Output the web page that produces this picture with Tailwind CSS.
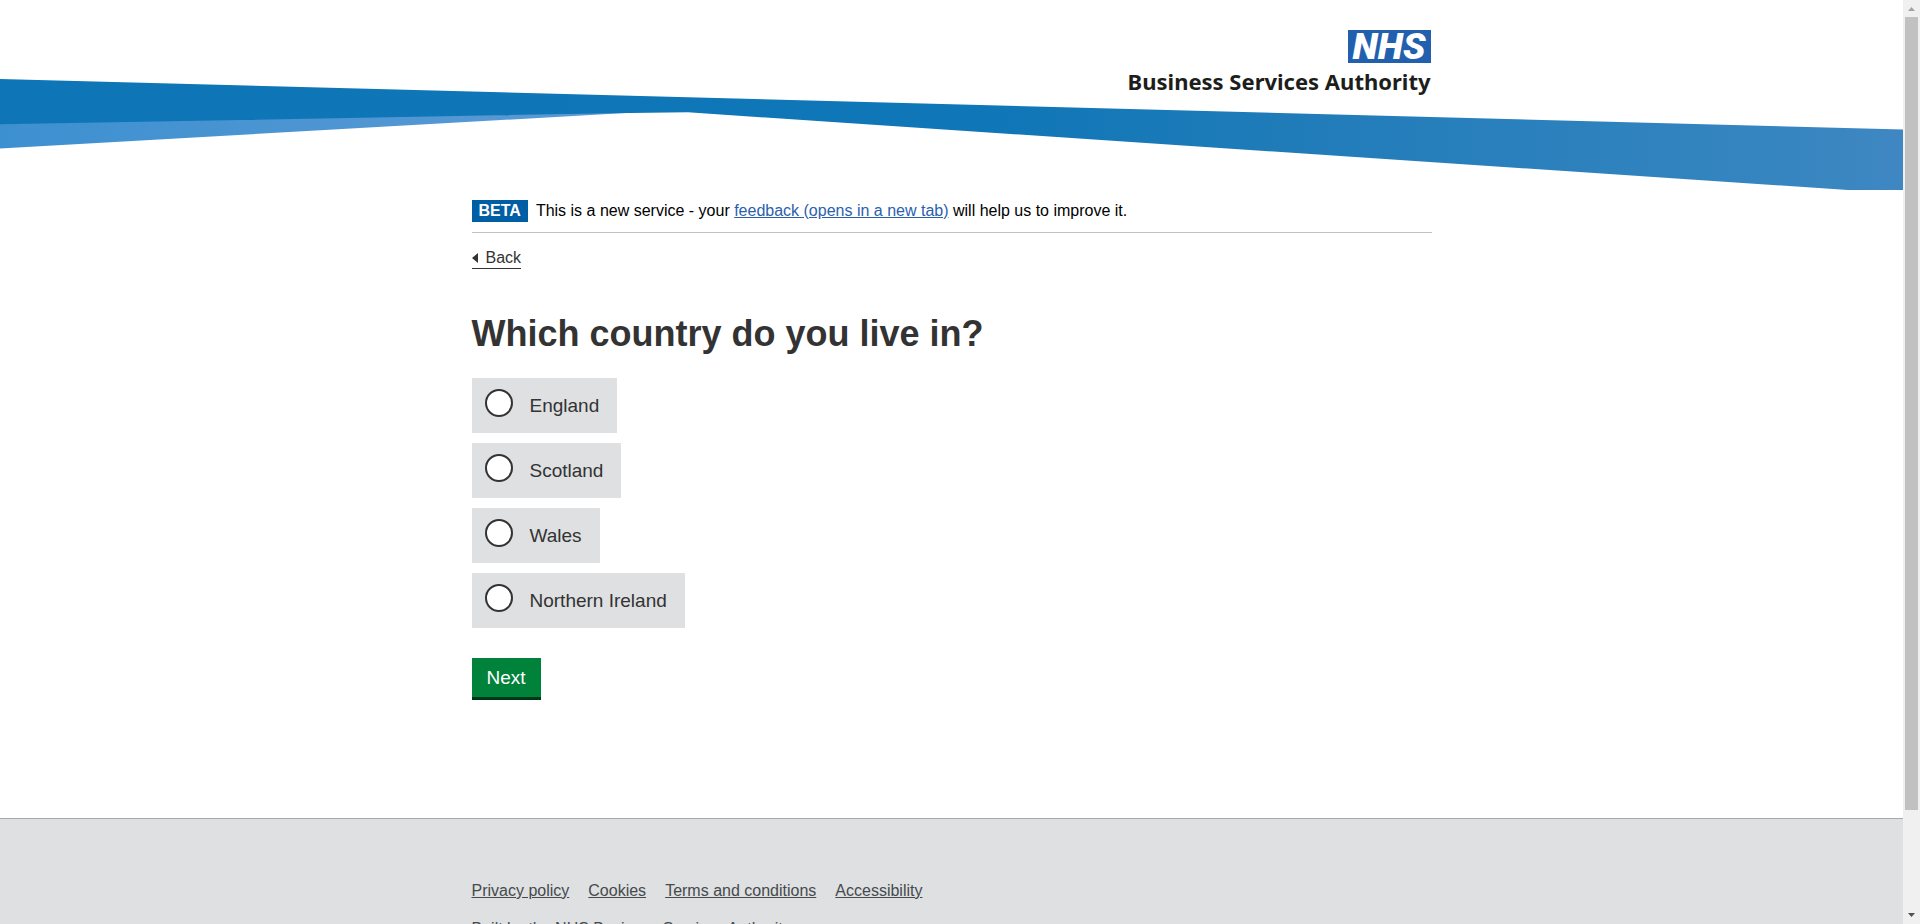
<!DOCTYPE html>
<html lang="en">
<head>
<meta charset="utf-8">
<meta name="viewport" content="width=device-width, initial-scale=1">
<title>Which country do you live in?</title>
<script src="https://cdn.jsdelivr.net/npm/@tailwindcss/browser@4"></script>
</head>
<body class="flex h-screen overflow-hidden bg-white font-['Liberation_Sans',Arial,sans-serif] text-base text-[#333333]">
<div class="flex min-w-0 flex-1 flex-col overflow-hidden">
  <header class="relative h-[190px] shrink-0">
    <svg class="absolute inset-0 h-full w-full" viewBox="0 0 1903 190" preserveAspectRatio="none" aria-hidden="true">
      <defs>
        <linearGradient id="main" gradientUnits="userSpaceOnUse" x1="0" y1="0" x2="1903" y2="0">
          <stop offset="0" stop-color="#0e75b6"/><stop offset="0.52" stop-color="#0f76b7"/><stop offset="0.68" stop-color="#207cb9"/><stop offset="0.93" stop-color="#3585c0"/><stop offset="1" stop-color="#3f87c2"/>
        </linearGradient>
        <linearGradient id="light" x1="0" y1="0" x2="1" y2="0">
          <stop offset="0" stop-color="#3d90d0"/><stop offset="1" stop-color="#5c9ad5"/>
        </linearGradient>
      </defs>
      <path fill="url(#light)" d="M0 123 0 148.500 630 112.800 610 112z"/>
      <path fill="url(#main)" d="M0 79 1903 129.500V190H1848L688 112.300 610 113.200 0 124.300z"/>
    </svg>
    <div class="relative mx-auto flex max-w-[960px] flex-col items-end pt-[30px] pr-px">
      <div class="flex h-[33px] w-[83px] items-center justify-center bg-[#2260ae] pt-px font-[Roboto,sans-serif] text-[37px] leading-8 font-black text-white italic">NHS</div>
      <div class="mt-[2px] font-['Noto_Sans',sans-serif] text-[22px] leading-8 font-bold whitespace-nowrap text-[#1d1d1b]">Business Services Authority</div>
    </div>
  </header>
  <main class="mx-auto flex w-full max-w-[960px] shrink-0 flex-col items-start pt-[10px] pb-[118px]">
    <div class="flex w-full items-center gap-2 border-b border-[#bfc1c3] pb-[10px] text-black">
      <strong class="bg-[#005ea5] px-[7px] leading-[22px] font-bold text-white">BETA</strong>
      <p class="leading-[22px]">This is a new service - your <a href="#" class="text-[#2b60ad] underline">feedback (opens in a new tab)</a> will help us to improve it.</p>
    </div>
    <a href="#" class="mt-[15px] flex items-center gap-2 border-b border-[#333333] leading-5">
      <svg class="h-[10px] w-[6px]" viewBox="0 0 6 10" fill="currentColor" aria-hidden="true"><path d="M6 0v10L0 5z"/></svg>Back
    </a>
    <form class="flex flex-col items-start">
      <fieldset class="flex flex-col items-start gap-[10px]">
        <legend class="pt-[44px] pb-[23px]"><h1 class="text-4xl leading-[42px] font-bold">Which country do you live in?</h1></legend>
        <label class="flex h-[55px] items-start gap-[17px] bg-[#dee0e2] pt-[11px] pr-[18px] pl-[13px] text-[19px]"><input type="radio" name="country" class="size-7 appearance-none rounded-full border-2 border-[#333333] bg-white checked:border-8"><span class="pt-[3px] leading-7">England</span></label>
        <label class="flex h-[55px] items-start gap-[17px] bg-[#dee0e2] pt-[11px] pr-[18px] pl-[13px] text-[19px]"><input type="radio" name="country" class="size-7 appearance-none rounded-full border-2 border-[#333333] bg-white checked:border-8"><span class="pt-[3px] leading-7">Scotland</span></label>
        <label class="flex h-[55px] items-start gap-[17px] bg-[#dee0e2] pt-[11px] pr-[18px] pl-[13px] text-[19px]"><input type="radio" name="country" class="size-7 appearance-none rounded-full border-2 border-[#333333] bg-white checked:border-8"><span class="pt-[3px] leading-7">Wales</span></label>
        <label class="flex h-[55px] items-start gap-[17px] bg-[#dee0e2] pt-[11px] pr-[18px] pl-[13px] text-[19px]"><input type="radio" name="country" class="size-7 appearance-none rounded-full border-2 border-[#333333] bg-white checked:border-8"><span class="pt-[3px] leading-7">Northern Ireland</span></label>
      </fieldset>
      <button type="button" class="mt-[30px] border-b-3 border-[#003618] bg-[#00823b] px-[15px] pt-2 pb-[7px] text-[19px] leading-6 text-white">Next</button>
    </form>
  </main>
  <footer class="shrink-0 border-t border-[#a1acb2] bg-[#dee0e2] pt-[60px] pb-16 text-[#454a4c]">
    <div class="mx-auto max-w-[960px]">
      <nav class="flex gap-[19px] leading-6">
        <a href="#" class="underline">Privacy policy</a>
        <a href="#" class="underline">Cookies</a>
        <a href="#" class="underline">Terms and conditions</a>
        <a href="#" class="underline">Accessibility</a>
      </nav>
      <p class="mt-[14px] leading-6">Built by the NHS Business Services Authority</p>
    </div>
  </footer>
</div>
<div class="flex w-[17px] shrink-0 flex-col bg-[#f0f0f0] px-[2px]" aria-hidden="true">
  <svg class="h-[17px] w-[13px] shrink-0" viewBox="0 0 13 17" fill="#a3a3a3"><path d="M3 11h7L6.500 7z"/></svg>
  <div class="flex-[793] bg-[#c1c1c1]"></div>
  <div class="flex-[97]"></div>
  <svg class="h-[17px] w-[13px] shrink-0" viewBox="0 0 13 17" fill="#505050"><path d="M3 6h7L6.500 10z"/></svg>
</div>
</body>
</html>
